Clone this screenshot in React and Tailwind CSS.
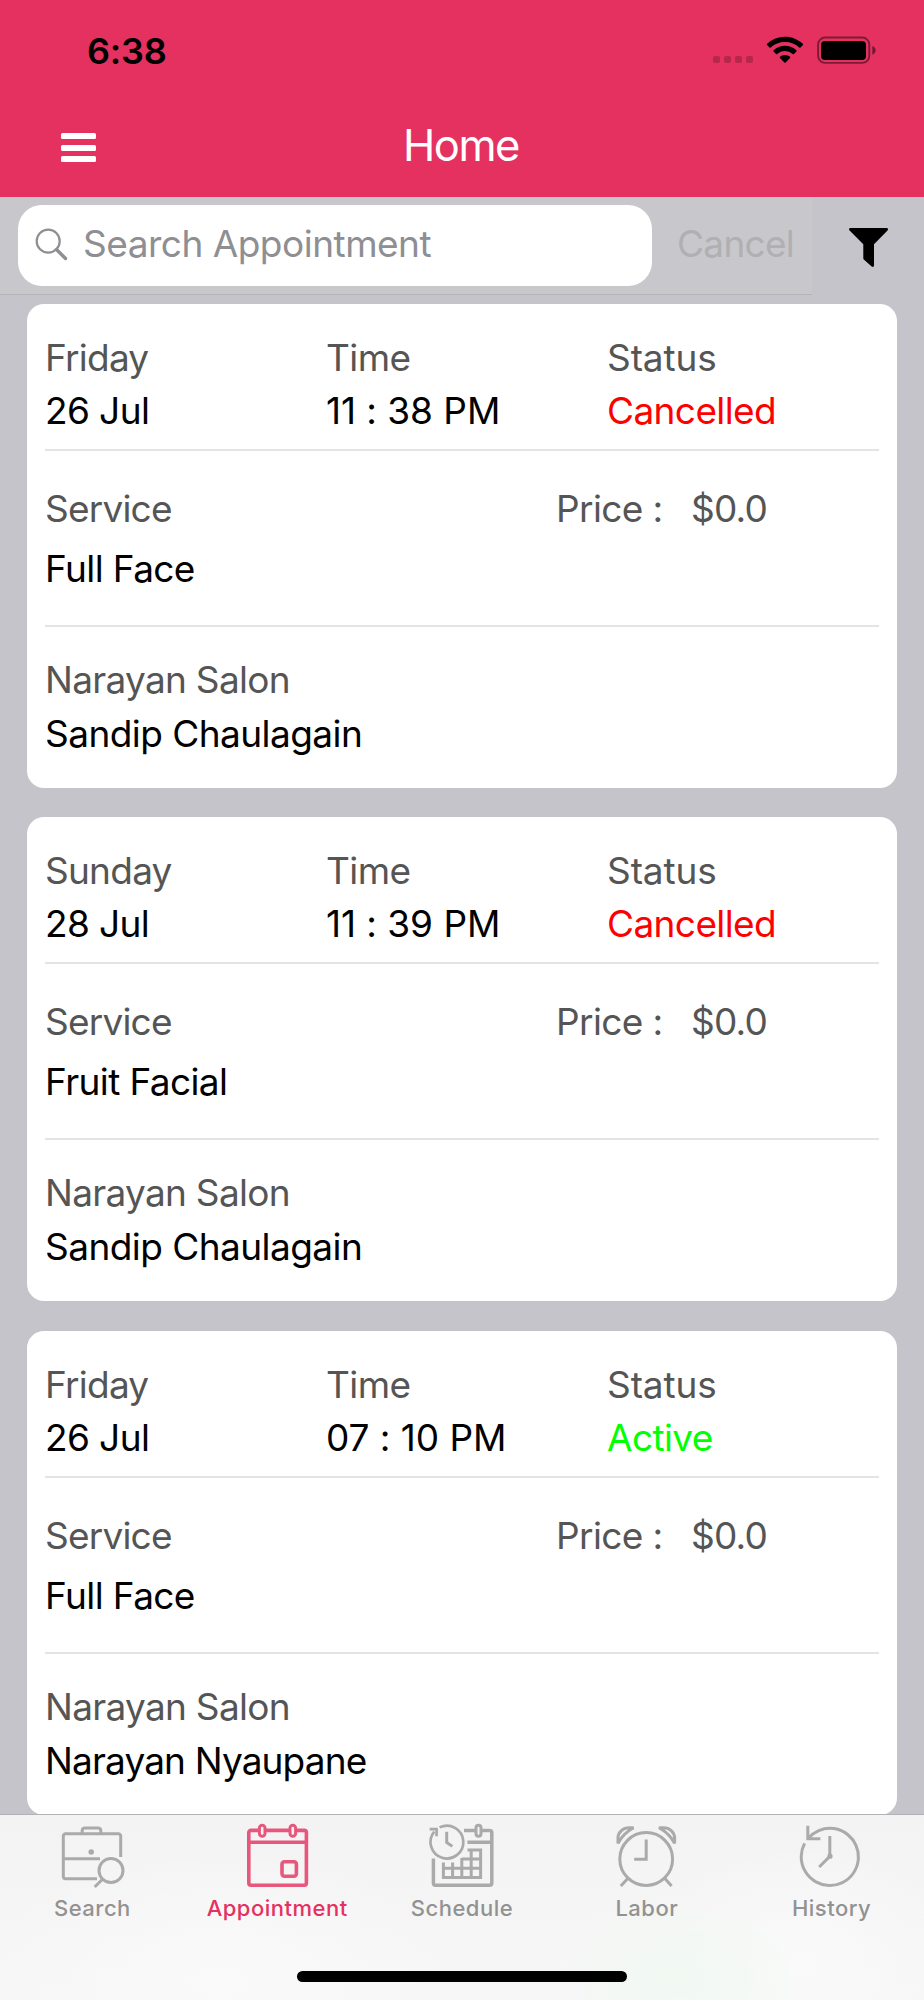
import React from 'react';

const appointments = [
  { day: 'Friday', date: '26 Jul', time: '11 : 38 PM', status: 'Cancelled', service: 'Full Face', price: '$0.0', salon: 'Narayan Salon', stylist: 'Sandip Chaulagain' },
  { day: 'Sunday', date: '28 Jul', time: '11 : 39 PM', status: 'Cancelled', service: 'Fruit Facial', price: '$0.0', salon: 'Narayan Salon', stylist: 'Sandip Chaulagain' },
  { day: 'Friday', date: '26 Jul', time: '07 : 10 PM', status: 'Active', service: 'Full Face', price: '$0.0', salon: 'Narayan Salon', stylist: 'Narayan Nyaupane' },
];

const statusColors = {
  Cancelled: 'text-[#ff0000]',
  Active: 'text-[#00ff00]',
};

function TabIcon({ children }) {
  return (
    <svg width="64" height="66" viewBox="0 0 64 66" fill="none" stroke="currentColor" strokeWidth="3" overflow="visible">
      {children}
    </svg>
  );
}

function SearchIcon() {
  return (
    <TabIcon>
      <path d="M37 54.7H5.5a2.2 2.2 0 0 1-2.2-2.2V12a2.2 2.2 0 0 1 2.2-2.2h53a2.2 2.2 0 0 1 2.2 2.2v21" />
      <path d="M22.2 9.5V6.5a2.6 2.6 0 0 1 2.6-2.6h13.4a2.6 2.6 0 0 1 2.6 2.6v3M3.3 34.8H40" />
      <circle cx="31.2" cy="28" r="2.8" fill="currentColor" stroke="none" />
      <circle cx="51" cy="46.5" r="12" />
      <path d="M42.5 55.2l-7.8 7.8" />
    </TabIcon>
  );
}

function AppointmentIcon() {
  return (
    <TabIcon>
      <path d="M14 6.4H6a2.2 2.2 0 0 0-2.2 2.2v50.5A2.2 2.2 0 0 0 6 61.3h53.2a2.2 2.2 0 0 0 2.2-2.2V8.6a2.2 2.2 0 0 0-2.2-2.2H51M20.5 6.4H44.5" strokeWidth="3.6" />
      <path d="M3.8 18.2h57.6" strokeWidth="3.6" />
      <rect x="14.4" y="1.2" width="5.6" height="11" rx="2.8" />
      <rect x="45" y="1.2" width="5.6" height="11" rx="2.8" />
      <rect x="37" y="37.8" width="14.4" height="14.4" rx="2.4" strokeWidth="3.6" />
    </TabIcon>
  );
}

function ScheduleIcon() {
  return (
    <TabIcon>
      <path d="M9.6 3.4A16.4 16.4 0 1 1 4.3 7.6" strokeWidth="2.7" />
      <path d="M-.4 5.2H6.6v7" strokeWidth="2.7" />
      <path d="M16.7 7.8v10.6l5.6 4" />
      <path d="M34 6.4h11.4M51.6 6.4h8a2.2 2.2 0 0 1 2.2 2.2v50.5a2.2 2.2 0 0 1-2.2 2.2H5.6a2.2 2.2 0 0 1-2.2-2.2V34.5M37.4 18.2h24.4" strokeWidth="3.5" />
      <rect x="46" y="1.2" width="5" height="11" rx="2.5" />
      <path d="M37.5 26H50.6V53.4H13.4V38.4M31.8 35H50.6M13.4 44.2H50.6M22.6 38.4v15M31.8 34v19.4M41.2 26v27.4" />
    </TabIcon>
  );
}

function LaborIcon() {
  return (
    <TabIcon>
      <circle cx="31.2" cy="35" r="26.4" />
      <path d="M31.2 15.6V35.2H19.2M13 54.2L5.8 62M49.6 54.2L56.6 62" />
      <path d="M3 19.4V14C3 8 8.4 3.8 14 3.8h4.6C11.6 7.6 6.4 12.8 3 19.4z" />
      <path d="M59.6 19.4V14c0-6-5.4-10.2-11-10.2H44c7 3.8 12.2 9 15.6 15.6z" />
    </TabIcon>
  );
}

function HistoryIcon() {
  return (
    <TabIcon>
      <path d="M8 14.4A28.6 28.6 0 1 1 4.6 19.4" />
      <path d="M7.8 1.8V14.8H20.4" />
      <path d="M29.8 12V32.4L19.2 43" />
      <circle cx="30" cy="32.2" r="2.6" fill="currentColor" stroke="none" />
    </TabIcon>
  );
}

const tabs = [
  { label: 'Search', icon: SearchIcon },
  { label: 'Appointment', icon: AppointmentIcon, active: true },
  { label: 'Schedule', icon: ScheduleIcon },
  { label: 'Labor', icon: LaborIcon },
  { label: 'History', icon: HistoryIcon },
];

function StatusBar() {
  return (
    <div className="flex h-[100px] justify-between pl-[87px] pr-[48px]">
      <span className="pt-[31px] text-[36px] leading-[40px] font-semibold tracking-[-0.2px] text-black">6:38</span>
      <div className="flex items-start pt-[36px]">
        <div className="mt-[20px] mr-[13px] flex gap-[4px]">
          {[0, 1, 2, 3].map(i => (
            <span key={i} className="h-[7px] w-[7px] rounded-[2px] bg-black/20" />
          ))}
        </div>
        <svg className="mr-[13px]" width="38" height="28" viewBox="0 0 38 28" fill="#000">
          <path d="M19 .7c6.9 0 13.2 2.7 17.9 7.1.4.4.4.9 0 1.3l-2.4 2.4c-.4.4-.9.4-1.3 0A20.6 20.6 0 0 0 19 6 20.6 20.6 0 0 0 4.8 11.5c-.4.4-.9.4-1.3 0L1.1 9.1c-.4-.4-.4-.9 0-1.3A26 26 0 0 1 19 .7z" />
          <path d="M19 9.7c4.4 0 8.4 1.7 11.4 4.5.4.4.4.9 0 1.3L28 17.9c-.4.4-.9.4-1.3 0A11.3 11.3 0 0 0 19 14.9c-3 0-5.7 1.1-7.7 3-.4.4-.9.4-1.3 0L7.6 15.5c-.4-.4-.4-.9 0-1.3A16.6 16.6 0 0 1 19 9.7z" />
          <path d="M19 18.9c2 0 3.700.7 5 1.8.4.4.4.9 0 1.3l-4.400 4.400c-.4.4-.8.4-1.200 0L14 22c-.4-.4-.4-.9 0-1.300 1.300-1.100 3-1.800 5-1.800z" />
        </svg>
        <svg width="59" height="28" viewBox="0 0 59 28">
          <rect x="1.1" y="1.5" width="51.2" height="25.4" rx="7" fill="none" stroke="#000" strokeOpacity=".45" strokeWidth="1.9" />
          <rect x="4" y="5" width="45" height="19" rx="4" fill="#000" />
          <path d="M55.3 10c2 .6 3.3 2.2 3.3 4.3s-1.3 3.7-3.3 4.5z" fill="#000" fillOpacity=".5" />
        </svg>
      </div>
    </div>
  );
}

function NavBar() {
  return (
    <div className="grid h-[97px] grid-cols-3">
      <button className="flex flex-col items-start gap-[5.5px] pt-[33px] pl-[61px]" aria-label="Menu">
        <span className="h-[6px] w-[35px] rounded-[1.5px] bg-white" />
        <span className="h-[6px] w-[35px] rounded-[1.5px] bg-white" />
        <span className="h-[6px] w-[35px] rounded-[1.5px] bg-white" />
      </button>
      <h1 className="pt-[19px] pr-[2px] text-center text-[43.5px] leading-[52px] tracking-[-1.5px] text-white">Home</h1>
    </div>
  );
}

function SearchBar() {
  return (
    <div className="flex h-[98px]">
      <div className="flex w-[812px] border-b border-[#b4b3b6] bg-[#c8c7cc] pt-[8px] pl-[18px]">
        <div className="flex h-[81px] w-[634px] rounded-[24px] bg-white pl-[17px]">
          <svg className="mt-[23px]" width="34" height="34" viewBox="0 0 34 34" fill="none" stroke="#8e8e93">
            <circle cx="13.2" cy="13.2" r="11.5" strokeWidth="2.2" />
            <path d="M21.5 21.5l9 9" strokeWidth="3.4" strokeLinecap="round" />
          </svg>
          <span className="pt-[19px] pl-[14px] text-[37px] leading-[40px] tracking-[-0.5px] text-[#8e8e93]">Search Appointment</span>
        </div>
        <span className="pt-[19px] pl-[25px] text-[37px] leading-[40px] tracking-[-0.7px] text-[#b0b0b2]">Cancel</span>
      </div>
      <svg className="mt-[31px] ml-[37px]" width="39" height="39" viewBox="0 0 39 39">
        <path d="M1.5 0h36c1.5 0 2 1.5 1 2.6L25 16.3v21c0 1.5-1.3 2-2.3 1.2l-7.9-7a1.8 1.8 0 0 1-.5-1.3V16.3L.6 2.6C-.4 1.5 0 0 1.5 0z" fill="#000" />
      </svg>
    </div>
  );
}

function AppointmentCard({ item }) {
  return (
    <div className="h-[484px] shrink-0 rounded-[17px] bg-white px-[18px] pt-[34px] text-[37px] leading-[40px] tracking-[-0.6px] text-black">
      <div className="grid h-[113px] grid-cols-[281px_281px_1fr] grid-rows-[40px_40px] gap-y-[13px] border-b-2 border-[#e4e4e6]">
        <span className="tracking-[-0.75px] text-[#555]">{item.day}</span>
        <span className="text-[#555]">Time</span>
        <span className="tracking-[-0.1px] text-[#555]">Status</span>
        <span>{item.date}</span>
        <span className="tracking-[-0.05px]">{item.time}</span>
        <span className={statusColors[item.status]}>{item.status}</span>
      </div>
      <div className="flex h-[176px] flex-col gap-[20px] border-b-2 border-[#e4e4e6] pt-[38px]">
        <div className="flex tracking-[-0.8px] text-[#555]">
          <span className="w-[511px]">Service</span>
          <span className="w-[135px] tracking-[-0.6px]">Price :</span>
          <span>{item.price}</span>
        </div>
        <span>{item.service}</span>
      </div>
      <div className="flex flex-col gap-[14px] pt-[33px]">
        <span className="tracking-[-0.7px] text-[#555]">{item.salon}</span>
        <span className={item.stylist.startsWith('Narayan') ? 'tracking-[-0.85px]' : 'tracking-[-0.55px]'}>{item.stylist}</span>
      </div>
    </div>
  );
}

function TabBar() {
  return (
    <div className="flex h-[186px] shrink-0 flex-col items-center border-t border-[#b2b2b4] bg-[#f5f5f5] bg-[radial-gradient(ellipse_130px_90px_at_680px_165px,#f1f9f2,transparent),radial-gradient(ellipse_240px_130px_at_220px_165px,#fafafa,transparent),radial-gradient(ellipse_160px_120px_at_800px_150px,#fafafa,transparent),linear-gradient(#f3f3f3,#f7f7f7)]">
      <div className="grid w-full grid-cols-5 pt-[9px]">
        {tabs.map(({ label, icon: Icon, active }) => (
          <div key={label} className={active ? 'flex flex-col items-center text-[#e53160]' : 'flex flex-col items-center text-[#929292]'}>
            <span className={active ? 'opacity-80' : 'opacity-75'}>
              <Icon />
            </span>
            <span className="mt-[4px] text-[22px] leading-[28px] font-medium tracking-[0.5px]">{label}</span>
          </div>
        ))}
      </div>
      <div className="mt-auto mb-[18px] h-[11px] w-[330px] rounded-full bg-black" />
    </div>
  );
}

export default function App() {
  return (
    <div className="flex h-[2000px] w-[924px] flex-col overflow-hidden bg-[#c5c4ca] font-['Inter',sans-serif]">
      <header className="h-[197px] shrink-0 bg-[#e53160]">
        <StatusBar />
        <NavBar />
      </header>
      <SearchBar />
      <main className="flex min-h-0 flex-1 flex-col gap-[29.5px] overflow-hidden px-[27px] pt-[8.5px]">
        {appointments.map((item, i) => (
          <AppointmentCard key={i} item={item} />
        ))}
      </main>
      <TabBar />
    </div>
  );
}
